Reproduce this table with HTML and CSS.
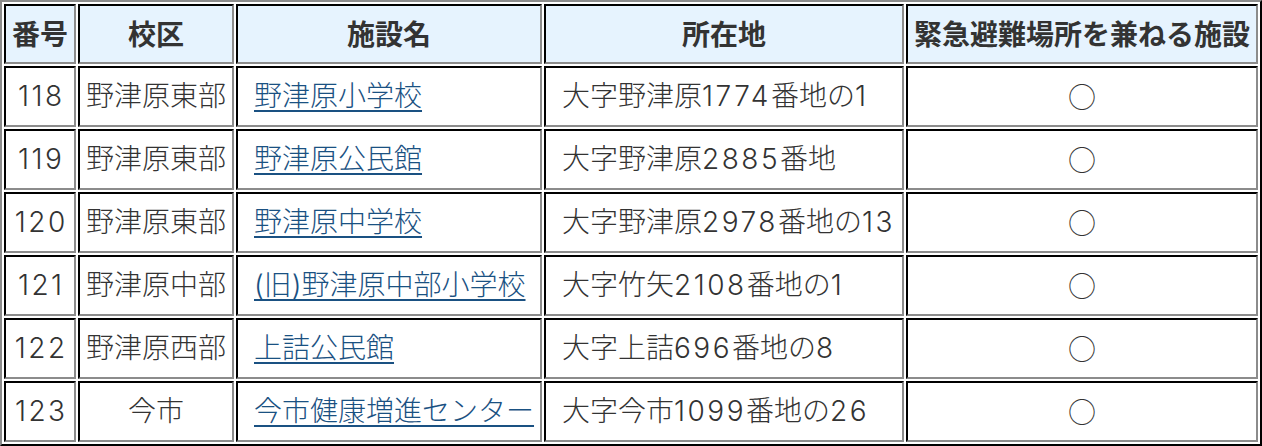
FILE: index.html
```html
<!DOCTYPE html>
<html lang="ja">
<head>
<meta charset="utf-8">
<title>緊急避難場所</title>
<link rel="stylesheet" href="styles.css">
</head>
<body>
<table class="shelter-table">
  <colgroup>
    <col class="c-no">
    <col class="c-area">
    <col class="c-name">
    <col class="c-addr">
    <col class="c-flag">
  </colgroup>
  <thead>
    <tr>
      <th>番号</th>
      <th>校区</th>
      <th>施設名</th>
      <th>所在地</th>
      <th>緊急避難場所を兼ねる施設</th>
    </tr>
  </thead>
  <tbody>
    <tr>
      <td class="num">118</td>
      <td class="area">野津原東部</td>
      <td class="name"><a href="#">野津原小学校</a></td>
      <td class="addr">大字野津原<span class="d">1774</span>番地の<span class="d">1</span></td>
      <td class="flag">○</td>
    </tr>
    <tr>
      <td class="num">119</td>
      <td class="area">野津原東部</td>
      <td class="name"><a href="#">野津原公民館</a></td>
      <td class="addr">大字野津原<span class="d">2885</span>番地</td>
      <td class="flag">○</td>
    </tr>
    <tr>
      <td class="num">120</td>
      <td class="area">野津原東部</td>
      <td class="name"><a href="#">野津原中学校</a></td>
      <td class="addr">大字野津原<span class="d">2978</span>番地の<span class="d">13</span></td>
      <td class="flag">○</td>
    </tr>
    <tr>
      <td class="num">121</td>
      <td class="area">野津原中部</td>
      <td class="name"><a href="#">(旧)野津原中部小学校</a></td>
      <td class="addr">大字竹矢<span class="d">2108</span>番地の<span class="d">1</span></td>
      <td class="flag">○</td>
    </tr>
    <tr>
      <td class="num">122</td>
      <td class="area">野津原西部</td>
      <td class="name"><a href="#">上詰公民館</a></td>
      <td class="addr">大字上詰<span class="d">696</span>番地の<span class="d">8</span></td>
      <td class="flag">○</td>
    </tr>
    <tr>
      <td class="num">123</td>
      <td class="area">今市</td>
      <td class="name"><a href="#">今市健康増進センター</a></td>
      <td class="addr">大字今市<span class="d">1099</span>番地の<span class="d">26</span></td>
      <td class="flag">○</td>
    </tr>
  </tbody>
</table>
</body>
</html>
```

FILE: styles.css
```css
html, body {
  margin: 0;
  padding: 0;
  background: #ffffff;
}

body {
  font-family: Inter, "Noto Sans CJK JP", sans-serif;
  font-size: 28px;
  color: #333333;
}

.shelter-table {
  width: 1262px;
  table-layout: fixed;
  border-collapse: separate;
  border-spacing: 2px;
  border-style: solid;
  border-width: 2px;
  border-color: #8c8c8c #000000 #000000 #8c8c8c;
}

.c-no { width: 72px; }
.c-area { width: 156px; }
.c-name { width: 306px; }
.c-addr { width: 360px; }
.c-flag { width: 352px; }

.shelter-table th,
.shelter-table td {
  border-style: solid;
  border-width: 2px;
  border-color: #000000 #8c8c8c #8c8c8c #000000;
  padding: 0 4px;
  line-height: 1.2;
  white-space: nowrap;
  overflow: hidden;
}

.shelter-table th {
  height: 56px;
  background: #e6f3fe;
  font-weight: bold;
  text-align: center;
  color: #333333;
  font-family: "Noto Sans CJK JP", sans-serif;
}

.shelter-table td {
  height: 57px;
  background: #ffffff;
  font-weight: 300;
}

.shelter-table .num,
.shelter-table .area,
.shelter-table .flag {
  text-align: center;
}

.shelter-table .num {
  letter-spacing: 2.5px;
  text-indent: 2.5px;
}

.shelter-table .name,
.shelter-table .addr {
  text-align: left;
  padding-left: 16px;
}

.d {
  letter-spacing: 2.5px;
}

.shelter-table .flag {
  font-family: "Noto Sans CJK JP", sans-serif;
}

.name a {
  color: #1a5182;
  text-decoration: underline;
  text-decoration-thickness: 2px;
  text-underline-offset: 4px;
}
```
